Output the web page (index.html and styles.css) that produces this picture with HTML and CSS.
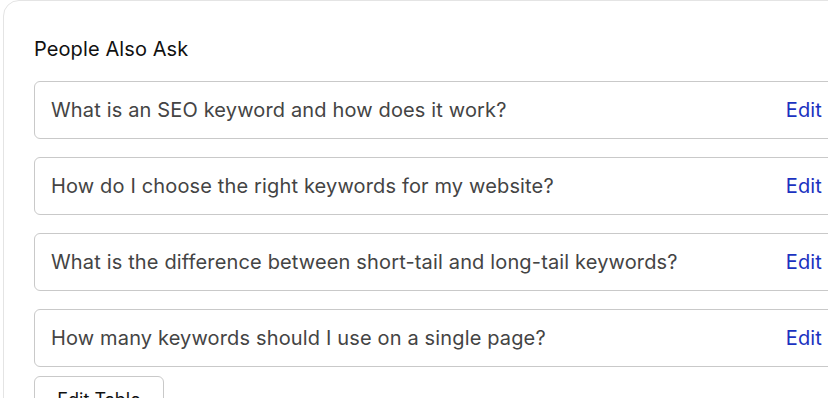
FILE: index.html
```html
<!DOCTYPE html>
<html>
<head>
<meta charset="utf-8">
<link rel="stylesheet" href="styles.css">
</head>
<body>
<div class="card">
  <h2 class="title">People Also Ask</h2>
  <div class="list">
    <div class="row"><span class="q">What is an SEO keyword and how does it work?</span><a class="edit">Edit</a></div>
    <div class="row"><span class="q">How do I choose the right keywords for my website?</span><a class="edit">Edit</a></div>
    <div class="row"><span class="q">What is the difference between short-tail and long-tail keywords?</span><a class="edit">Edit</a></div>
    <div class="row"><span class="q">How many keywords should I use on a single page?</span><a class="edit">Edit</a></div>
  </div>
  <button class="btn">Edit Table</button>
</div>
</body>
</html>
```
FILE: styles.css
```css
html, body { margin: 0; padding: 0; background: #fff; overflow: hidden; }
body { width: 828px; height: 398px; font-family: "Inter", sans-serif; }
.card {
  margin-left: 3px;
  width: 860px;
  height: 420px;
  border: 1px solid #e4e4e4;
  border-radius: 16px;
  box-sizing: border-box;
  padding: 34px 0 0 30px;
}
.title { margin: 0; font-size: 20px; font-weight: 400; color: #111; line-height: 28px; letter-spacing: 0.1px; }
.list { margin-top: 18px; display: flex; flex-direction: column; gap: 18px; width: 805px; }
.row {
  height: 58px; box-sizing: border-box;
  border: 1px solid #c9c9c9; border-radius: 6px;
  display: flex; align-items: center; justify-content: space-between;
  padding: 0 16px 0 16px;
  font-size: 20px; letter-spacing: 0.15px;
}
.q { color: #444; }
.edit { color: #1b32c0; }
.btn {
  display: block;
  margin-top: 9px;
  width: 130px; height: 46px;
  border: 1px solid #c9c9c9; border-radius: 6px; background: #fff;
  font-family: inherit; font-size: 18px; color: #111;
  padding: 0; text-align: center;
}
```
